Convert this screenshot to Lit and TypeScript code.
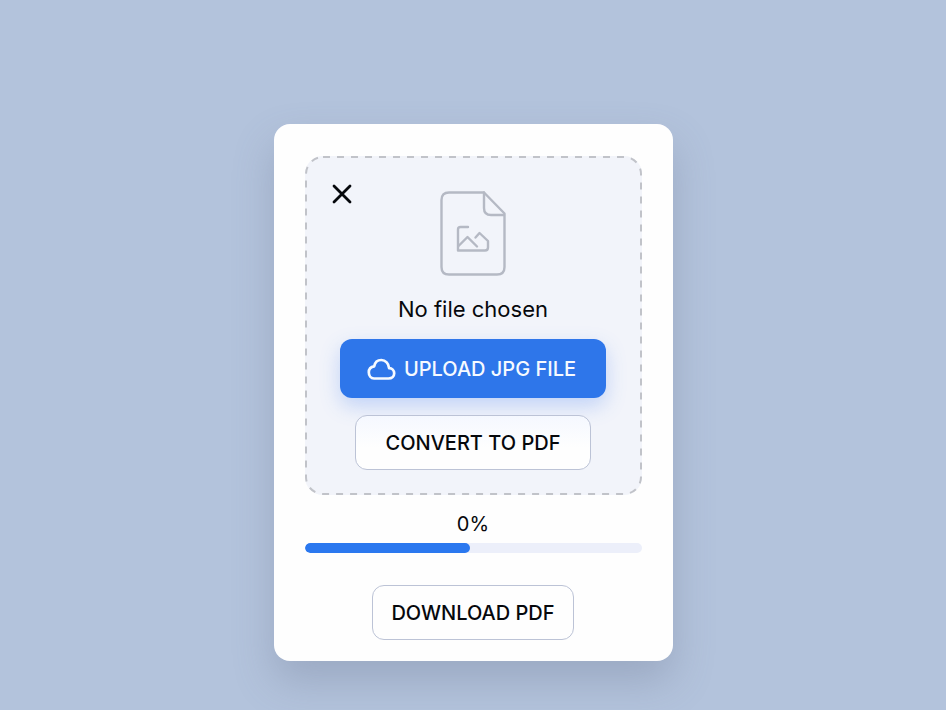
import { LitElement, html, css } from "lit";
import { customElement, property } from "lit/decorators.js";

@customElement("app-root")
export class AppRoot extends LitElement {
  @property({ type: String }) fileName = "No file chosen";
  @property({ type: Number }) percent = 0;
  @property({ type: Number }) filled = 49;

  static styles = css`
    :host {
      display: flex;
      justify-content: center;
      align-items: flex-start;
      box-sizing: border-box;
      min-height: 100vh;
      padding: 124px 16px 49px;
      background: #b3c3dc;
      color: #06080c;
      font-family: Inter, "Liberation Sans", sans-serif;
      font-size: 20px;
      font-weight: 500;
      line-height: 28px;
    }
    .card {
      box-sizing: border-box;
      width: 100%;
      max-width: 399px;
      padding: 32px 31px 21px;
      display: flex;
      flex-direction: column;
      align-items: center;
      background: #fefefe;
      border-radius: 16px;
      box-shadow: 0 20px 40px rgba(100, 110, 135, 0.3);
    }
    .zone {
      position: relative;
      box-sizing: border-box;
      width: 100%;
      padding: 35px 24px 25px;
      display: flex;
      flex-direction: column;
      align-items: center;
      background: #f2f4fa;
      border-radius: 18px;
    }
    .dashes {
      position: absolute;
      inset: 0;
      width: 100%;
      height: 100%;
      pointer-events: none;
    }
    .dashes rect {
      x: 1px;
      y: 1px;
      width: calc(100% - 2px);
      height: calc(100% - 2px);
      fill: none;
      stroke: #c1c3c9;
      stroke-width: 2;
      stroke-linecap: butt;
      stroke-dasharray: 7 7;
    }
    button {
      display: flex;
      align-items: center;
      justify-content: center;
      box-sizing: border-box;
      margin: 0;
      font: inherit;
      color: inherit;
      cursor: pointer;
    }
    .close {
      position: absolute;
      top: 26px;
      left: 25px;
      padding: 0;
      border: 0;
      background: none;
    }
    svg {
      display: block;
      fill: none;
      stroke: currentColor;
      stroke-linecap: round;
      stroke-linejoin: round;
    }
    .file {
      color: #b5b9c4;
    }
    .name {
      margin: 19px 0 16px;
      font-size: 22px;
      font-weight: 400;
    }
    .upload {
      height: 59px;
      padding: 0 30px 0 27px;
      gap: 8px;
      border: 0;
      border-radius: 12px;
      background: #2e76ea;
      color: #f6faff;
      white-space: nowrap;
      box-shadow: 0 8px 20px rgba(70, 125, 240, 0.28);
    }
    .plain {
      height: 55px;
      border: 1px solid #bcc3d6;
      border-radius: 12px;
      background: #fefefe;
      white-space: nowrap;
    }
    .convert {
      position: relative;
      margin-top: 17px;
      padding: 0 30px;
      background: linear-gradient(#f5f8ff, #fefefe 60%);
    }
    .percent {
      margin: 15px 0 5px;
      font-weight: 400;
    }
    progress {
      appearance: none;
      display: block;
      width: 100%;
      height: 10px;
      border: 0;
      border-radius: 5px;
      overflow: hidden;
      background: #eceffa;
    }
    progress::-webkit-progress-bar {
      background: #eceffa;
    }
    progress::-webkit-progress-value {
      background: #2b78ef;
      border-radius: 5px;
    }
    .download {
      margin-top: 32px;
      padding: 0 18px;
    }
  `;

  render() {
    return html`
      <main class="card">
        <section class="zone">
          <svg class="dashes" aria-hidden="true"><rect rx="17" /></svg>
          <button class="close" aria-label="Remove file">
            <svg width="24" height="24" viewBox="0 0 24 24" stroke-width="2.8">
              <path d="M4 4L20 20M20 4L4 20" />
            </svg>
          </button>
          <svg class="file" width="66" height="85" viewBox="0 0 66 85" stroke-width="2.4" aria-hidden="true">
            <path d="M44 1.500H9Q1.500 1.500 1.500 9V76Q1.500 83.500 9 83.500H57Q64.500 83.500 64.500 76V22.500Z" />
            <path d="M44 1.500V17Q44 24 51 24H64" />
            <path d="M28 36H20.500Q18 36 18 38.500V59.500H45Q48 59.500 48 56.500V50L39.500 42L35.500 46.500" />
            <path d="M18.500 55L27.500 46L37 55.500" />
          </svg>
          <p class="name">${this.fileName}</p>
          <button class="upload">
            <svg width="29" height="24" viewBox="0 0 29 24" stroke-width="2.700" aria-hidden="true">
              <path d="M7 21.500H21.500C25 21.500 27.200 19.200 27.200 16.300C27.200 13.400 25 11.200 22.100 11.100C21.800 6.500 18.500 3 14.300 3C10.500 3 7.900 5.500 7.200 9.300C4 9.800 1.800 12.100 1.800 15.300C1.800 18.900 4 21.500 7 21.500Z" />
            </svg>
            UPLOAD JPG FILE
          </button>
          <button class="plain convert">CONVERT TO PDF</button>
        </section>
        <label class="percent" for="progress">${this.percent}%</label>
        <progress id="progress" max="100" .value=${this.filled}></progress>
        <button class="plain download">DOWNLOAD PDF</button>
      </main>
    `;
  }
}
